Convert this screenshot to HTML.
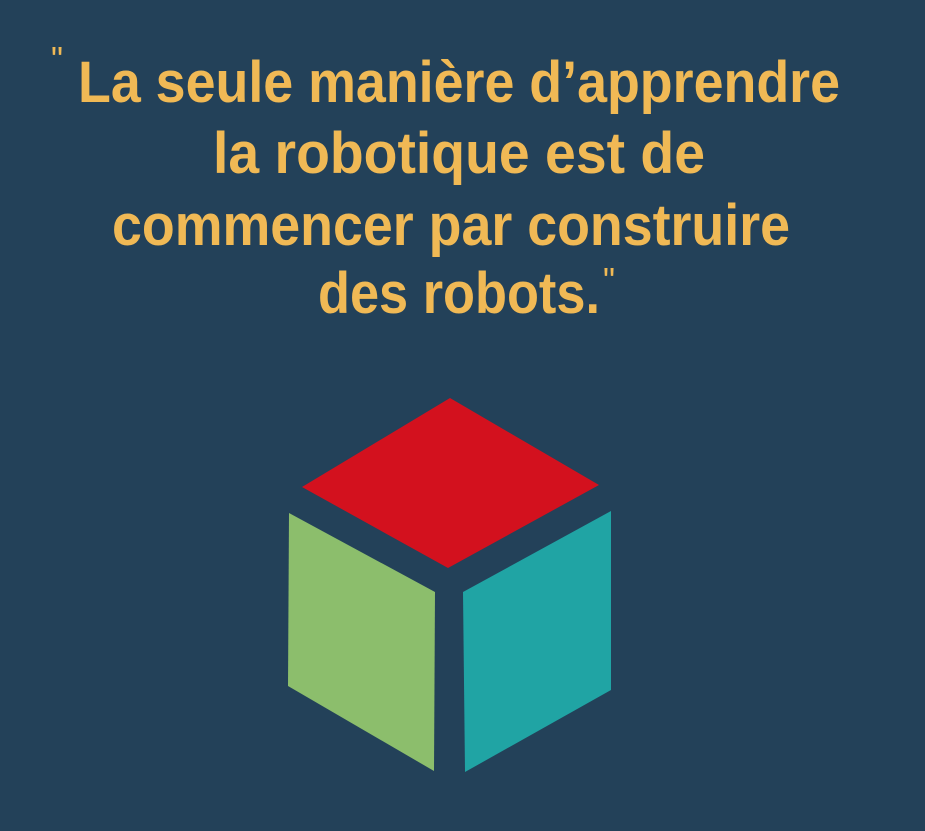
<!DOCTYPE html>
<html><head><meta charset="utf-8"><style>
html,body{margin:0;padding:0;background:#234159;}
svg{display:block}
text{font-family:"Liberation Sans",sans-serif;font-weight:bold;fill:#F0B955;}
</style></head><body>
<svg width="925" height="831" viewBox="0 0 925 831" xmlns="http://www.w3.org/2000/svg">
<rect width="925" height="831" fill="#234159"/>
<text x="51" y="72" font-size="36" style="font-weight:normal" textLength="12" lengthAdjust="spacingAndGlyphs">"</text>
<text x="78" y="102" font-size="58" textLength="762" lengthAdjust="spacingAndGlyphs">La seule manière d’apprendre</text>
<text x="213" y="173" font-size="58" textLength="492" lengthAdjust="spacingAndGlyphs">la robotique est de</text>
<text x="112" y="245" font-size="58" textLength="678" lengthAdjust="spacingAndGlyphs">commencer par construire</text>
<text x="318" y="313" font-size="58" textLength="282" lengthAdjust="spacingAndGlyphs">des robots.</text>
<text x="603" y="293" font-size="36" style="font-weight:normal" textLength="12" lengthAdjust="spacingAndGlyphs">"</text>
<polygon points="450,398 599,485 448,568 302,487" fill="#D3111E"/>
<polygon points="289,513 435,592 434,771 288,686" fill="#8CBE6C"/>
<polygon points="463,592 611,511 611,690 465,772" fill="#20A4A4"/>
</svg>
</body></html>
